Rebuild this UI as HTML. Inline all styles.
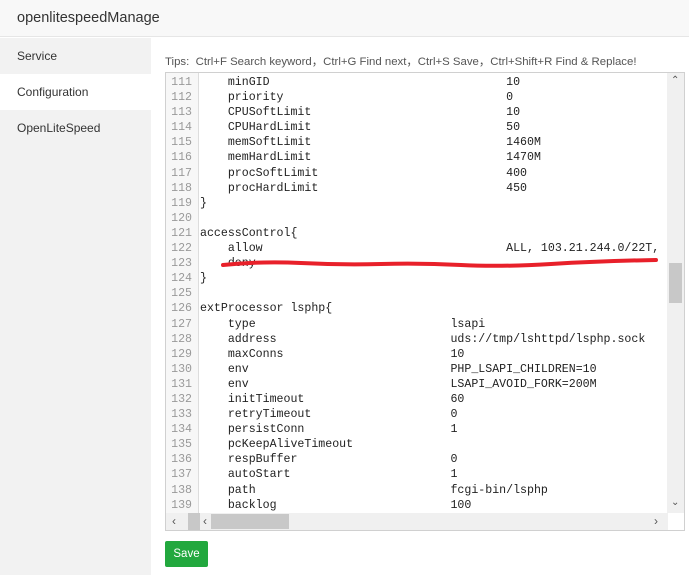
<!DOCTYPE html>
<html><head><style>
body{margin:0;width:689px;height:575px;overflow:hidden;background:#fff;font-family:"Liberation Sans",sans-serif;position:relative}
.hdr{position:absolute;left:0;top:0;width:689px;height:37px;background:#f8f8f8;border-bottom:1px solid #e6e6e6;box-sizing:border-box}
.hdr span{position:absolute;left:17px;top:10px;font-size:14.5px;color:#333}
.side{position:absolute;left:0;top:38px;width:151px;height:537px;background:#f2f2f2}
.side div{height:36px;line-height:36px;padding-left:17px;font-size:12px;color:#333}
.side .act{background:#fff}
.tips{position:absolute;left:165px;top:53px;font-size:11.4px;color:#555}
.ed{position:absolute;left:165px;top:72px;width:520px;height:459px;border:1px solid #d0d0d0;box-sizing:border-box;overflow:hidden;background:#fff}
.gut{position:absolute;left:0;top:0;width:32px;height:100%;background:#f7f7f7;border-right:1px solid #ddd}
.code{position:absolute;left:0;top:2px;font-family:"Liberation Mono",monospace;font-size:11.6px;line-height:15.1px;white-space:pre;color:#222}
.code .n{display:inline-block;width:26px;text-align:right;color:#999;margin-right:8px}
.vs{position:absolute;right:0;top:0;width:17px;height:440px;background:#f0f0f0}
.vs .th{position:absolute;left:2px;top:190px;width:13px;height:40px;background:#c8c8c8}
.hs{position:absolute;left:0;top:440px;width:502px;height:17px;background:#f0f0f0}
.hs .th{position:absolute;left:45px;top:1px;width:78px;height:15px;background:#c8c8c8}
.save{position:absolute;left:165px;top:541px;width:43px;height:26px;background:#22a83e;border-radius:2px;color:#fff;font-size:11.5px;line-height:26px;text-align:center}
.ar{position:absolute;font-size:10px;color:#555}
</style></head><body>
<div class="hdr"><span>openlitespeedManage</span></div>
<div class="side"><div>Service</div><div class="act">Configuration</div><div>OpenLiteSpeed</div></div>
<div class="tips">Tips:&nbsp; Ctrl+F Search keyword，Ctrl+G Find next，Ctrl+S Save，Ctrl+Shift+R Find &amp; Replace!</div>
<div class="ed">
<div class="gut"></div>
<div class="code"><span class="n">111</span>    minGID                                  10
<span class="n">112</span>    priority                                0
<span class="n">113</span>    CPUSoftLimit                            10
<span class="n">114</span>    CPUHardLimit                            50
<span class="n">115</span>    memSoftLimit                            1460M
<span class="n">116</span>    memHardLimit                            1470M
<span class="n">117</span>    procSoftLimit                           400
<span class="n">118</span>    procHardLimit                           450
<span class="n">119</span>}
<span class="n">120</span>
<span class="n">121</span>accessControl{
<span class="n">122</span>    allow                                   ALL, 103.21.244.0/22T,
<span class="n">123</span>    deny
<span class="n">124</span>}
<span class="n">125</span>
<span class="n">126</span>extProcessor lsphp{
<span class="n">127</span>    type                            lsapi
<span class="n">128</span>    address                         uds://tmp/lshttpd/lsphp.sock
<span class="n">129</span>    maxConns                        10
<span class="n">130</span>    env                             PHP_LSAPI_CHILDREN=10
<span class="n">131</span>    env                             LSAPI_AVOID_FORK=200M
<span class="n">132</span>    initTimeout                     60
<span class="n">133</span>    retryTimeout                    0
<span class="n">134</span>    persistConn                     1
<span class="n">135</span>    pcKeepAliveTimeout
<span class="n">136</span>    respBuffer                      0
<span class="n">137</span>    autoStart                       1
<span class="n">138</span>    path                            fcgi-bin/lsphp
<span class="n">139</span>    backlog                         100</div>
<svg style="position:absolute;left:55px;top:182px" width="440" height="16"><path d="M2 10 Q40 6 80 8 T160 9 T240 10 T330 9 T435 5" stroke="#e8202a" stroke-width="4" fill="none" stroke-linecap="round"/></svg>
<div class="vs"><div class="th"></div><span class="ar" style="left:4px;top:2px">&#8963;</span><span class="ar" style="left:4px;top:424px">&#8964;</span></div>
<div class="hs"><div style="position:absolute;left:22px;top:0;width:12px;height:17px;background:#c8c8c8"></div><div class="th"></div><span class="ar" style="left:6px;top:1px;font-size:12px">‹</span><span class="ar" style="left:37px;top:1px;font-size:12px">‹</span><span class="ar" style="left:488px;top:1px;font-size:12px">›</span></div>
</div>
<div class="save">Save</div>
</body></html>
